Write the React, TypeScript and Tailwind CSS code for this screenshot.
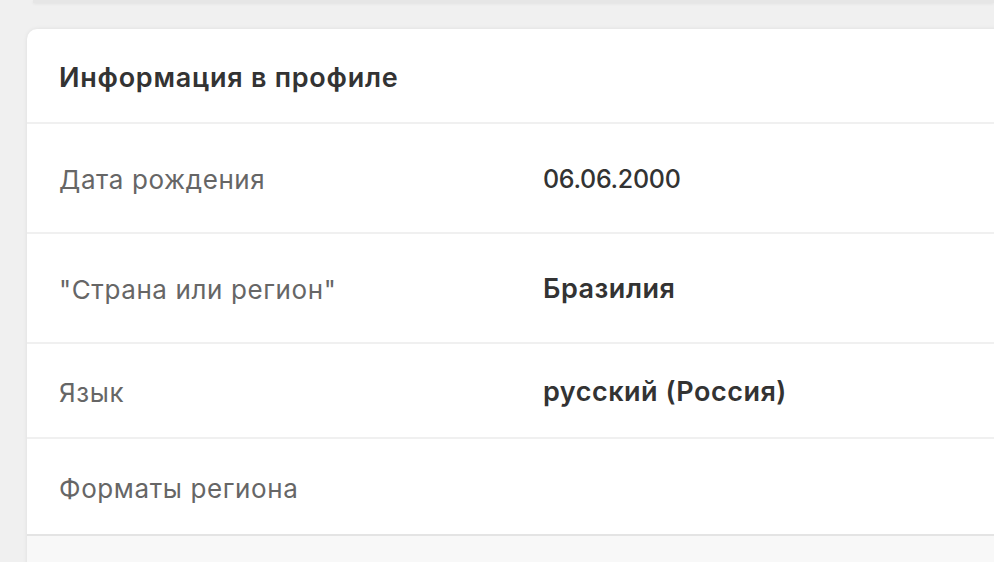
import React from 'react';

const rows = [
    { label: 'Дата рождения', value: '06.06.2000', valueClass: 'text-[25px] font-medium tracking-[-0.3px]', h: 'h-[110px]' },
    { label: '"Страна или регион"', value: 'Бразилия', valueClass: 'text-[27px] font-semibold tracking-[0.5px]', h: 'h-[110px]' },
    { label: 'Язык', value: 'русский (Россия)', valueClass: 'text-[27px] font-semibold tracking-[0.5px]', h: 'h-[95px]' },
    { label: 'Форматы региона', value: '', valueClass: '', h: 'h-[97px]' },
];

const App: React.FC = () => {
    return (
        <div className="h-[562px] w-[994px] overflow-hidden bg-[#f0f0f0] font-['Inter','Noto_Sans',sans-serif]">
            {/* bottom edge of the card above */}
            <div className="ml-[33px] h-[3px] bg-[#e6e6e6] shadow-[0_1px_3px_rgba(0,0,0,0.06)]" />

            <div className="ml-[27px] mt-[26px] w-[1000px] rounded-tl-[10px] bg-white shadow-[0_0_4px_rgba(0,0,0,0.08)]">
                <div className="flex h-[95px] items-center border-b-2 border-[#f0f0f0] pl-[32px] pt-[6px]">
                    <h2 className="text-[27px] font-semibold tracking-[0.75px] text-[#333333]">Информация в профиле</h2>
                </div>
                {rows.map((row, i) => (
                    <div
                        key={row.label}
                        className={`flex items-center pl-[32px] pt-[3px] ${row.h} ${i < rows.length - 1 ? 'border-b-2 border-[#f0f0f0]' : 'border-b-2 border-[#e4e4e4]'}`}
                    >
                        <div className="w-[484px] text-[26px] tracking-[0.6px] text-[#666666]">{row.label}</div>
                        <div className={`text-[#333333] ${row.valueClass}`}>{row.value}</div>
                    </div>
                ))}
                <div className="h-[40px] bg-[#f8f8f8]" />
            </div>
        </div>
    );
};

export default App;
